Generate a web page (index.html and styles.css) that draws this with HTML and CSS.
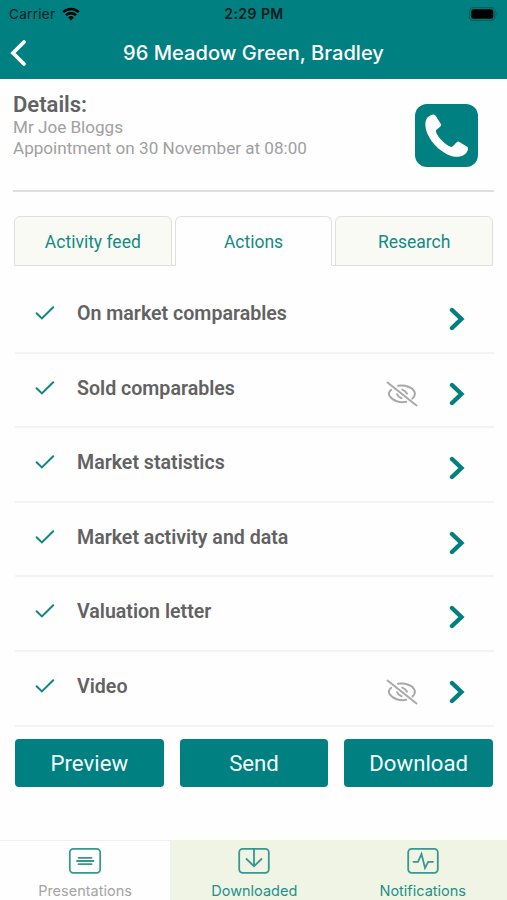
FILE: index.html
```html
<!DOCTYPE html>
<html lang="en">
<head>
<meta charset="utf-8">
<meta name="viewport" content="width=device-width, initial-scale=1">
<title>96 Meadow Green, Bradley</title>
<link rel="stylesheet" href="styles.css">
</head>
<body>
<svg class="defs" aria-hidden="true">
  <symbol id="check" viewBox="0 0 20 16"><path d="M1.6 8.3L6.9 13.4L18.2 2.2"/></symbol>
  <symbol id="chevron" viewBox="0 0 16 24"><path d="M3 3L12.4 12L3 21"/></symbol>
  <symbol id="hidden" viewBox="0 0 32 26">
    <path d="M1.5 1.5L30.5 24.5"/>
    <path d="M12 4.8C18.5 3.4 27.5 6.5 28.8 11.8C29.2 14 28 16.2 26.3 17.6"/>
    <path d="M5.2 8.8C3 10.5 2.2 13 3.8 15.3C6.8 20 14 22 20.2 20.8"/>
    <path d="M16.3 8.6C18.4 9.4 20.3 10.8 21 12.6"/>
    <path d="M11 13.2C11.8 15 13.4 16.6 15.6 17.2"/>
  </symbol>
</svg>
<header class="header">
  <div class="status">
    <div class="carrier"><span>Carrier</span>
      <svg class="wifi" viewBox="0 0 18 14"><path d="M9 13.4L6.2 10.4A4 4 0 0 1 11.8 10.4Z" fill="#000"/><path d="M4 8.2A7.2 7.2 0 0 1 14 8.2M1.2 5.1A11.2 11.2 0 0 1 16.8 5.1" fill="none" stroke="#000" stroke-width="2.5"/></svg>
    </div>
    <div class="time">2:29 PM</div>
    <svg class="battery" viewBox="0 0 30 14"><rect x=".6" y=".6" width="25.4" height="12.8" rx="4" fill="none" stroke="#04605f" stroke-width="1.2"/><rect x="2.3" y="2.2" width="22" height="9.6" rx="2.5"/><path d="M27.5 4.8Q30 7 27.5 9.2Z" fill="#04605f"/></svg>
  </div>
  <div class="nav">
    <svg class="back" viewBox="0 0 18 28"><path d="M15 3L4 14L15 25"/></svg>
    <h1 class="title">96 Meadow Green, Bradley</h1>
  </div>
</header>
<main class="main">
  <section class="details">
    <div>
      <h2 class="heading">Details:</h2>
      <p class="line name">Mr Joe Bloggs</p>
      <p class="line when">Appointment on 30 November at 08:00</p>
    </div>
    <div class="call"><svg viewBox="0 0 63 63"><path d="M13.2 12.8C15.5 10.8 18.5 9.6 20.3 11.3L26.2 20.5C26 23.5 21.3 24.8 20.8 27.2C22.2 32.7 30.5 41.1 36 43C38.5 43 41 37.5 43.5 37.5L52.6 43C53.8 45.7 51.7 49.3 48.9 51C44.5 53.7 37.8 53.2 31.8 50.2C20 44 10.5 31.5 10.3 20.8C10.3 17.5 11.3 14.6 13.2 12.8Z"/></svg></div>
  </section>
  <nav class="tabs">
    <div class="tab"><span>Activity feed</span></div><div class="gap"></div>
    <div class="tab active"><span>Actions</span></div><div class="gap"></div>
    <div class="tab"><span>Research</span></div>
  </nav>
  <ul class="list">
    <li class="row"><svg class="check"><use href="#check"/></svg><span class="label">On market comparables</span><svg class="chevron"><use href="#chevron"/></svg></li>
    <li class="row"><svg class="check"><use href="#check"/></svg><span class="label">Sold comparables</span><svg class="eye"><use href="#hidden"/></svg><svg class="chevron"><use href="#chevron"/></svg></li>
    <li class="row"><svg class="check"><use href="#check"/></svg><span class="label">Market statistics</span><svg class="chevron"><use href="#chevron"/></svg></li>
    <li class="row"><svg class="check"><use href="#check"/></svg><span class="label">Market activity and data</span><svg class="chevron"><use href="#chevron"/></svg></li>
    <li class="row"><svg class="check"><use href="#check"/></svg><span class="label">Valuation letter</span><svg class="chevron"><use href="#chevron"/></svg></li>
    <li class="row"><svg class="check"><use href="#check"/></svg><span class="label">Video</span><svg class="eye"><use href="#hidden"/></svg><svg class="chevron"><use href="#chevron"/></svg></li>
  </ul>
  <div class="buttons">
    <button class="button">Preview</button>
    <button class="button">Send</button>
    <button class="button">Download</button>
  </div>
</main>
<footer class="footer">
  <div class="item current"><svg viewBox="0 0 34 28"><rect x="1.8" y="1.8" width="30.4" height="24" rx="3.5"/><path d="M10.5 10.8H23.5M9 14H25.5M10.5 17.2H23.5"/></svg><span>Presentations</span></div>
  <div class="item"><svg viewBox="0 0 34 28"><rect x="2.2" y="1.8" width="29.6" height="24" rx="3.5"/><path d="M17 2V19M9.5 12L17 19.2L24.5 12"/></svg><span>Downloaded</span></div>
  <div class="item"><svg viewBox="0 0 34 28"><rect x="2.2" y="1.8" width="29.6" height="24" rx="3.5"/><path d="M7.5 14.8H12L15.5 7L19 21L22.2 14.8H27"/></svg><span>Notifications</span></div>
</footer>
</body>
</html>
```

FILE: styles.css
```css
* { box-sizing: border-box; }
body {
  margin: 0;
  height: 900px;
  display: flex;
  flex-direction: column;
  overflow: hidden;
  background: #fefefe;
  color: #626262;
  font-family: Roboto, "Liberation Sans", sans-serif;
}
.defs { display: none; }
.header { height: 79px; flex: none; background: #008080; }
.status {
  height: 27px;
  padding: 0 8px 0 9px;
  display: grid;
  grid-template-columns: 1fr auto 1fr;
  align-items: center;
  font-family: Inter, sans-serif;
  font-size: 13.5px;
  line-height: 28px;
  color: #001c1c;
}
.carrier { display: flex; align-items: center; gap: 7px; letter-spacing: .3px; }
.wifi { width: 18px; height: 14px; }
.time { font-weight: 600; font-size: 14px; letter-spacing: .45px; }
.battery { width: 30px; height: 14px; justify-self: end; }
.nav {
  height: 52px;
  padding: 0 9px;
  display: grid;
  grid-template-columns: 20px 1fr 20px;
  align-items: center;
}
.back { width: 18px; height: 28px; fill: none; stroke: #fff; stroke-width: 3.8; stroke-linecap: round; }
.title {
  margin: 0;
  text-align: center;
  color: #fff;
  font: 550 20.1px/50px Inter, sans-serif;
  white-space: nowrap;
}
.main { flex: 1; padding: 0 13px; }
.details {
  height: 113px;
  padding: 14px 16px 0 0;
  display: flex;
  justify-content: space-between;
  border-bottom: 2px solid #dedede;
}
.heading { margin: 0; font-size: 22px; line-height: 24px; font-weight: 600; }
.line { margin: 0; font-size: 17.1px; line-height: 20.5px; color: #a0a0a0; white-space: nowrap; }
.call { width: 63px; height: 63px; margin-top: 11px; border-radius: 12px; background: #008080; }
.call svg { display: block; fill: #fff; }
.tabs { margin-top: 24px; padding: 0 1px; height: 50px; display: flex; }
.tab {
  flex: 1;
  display: flex;
  justify-content: center;
  border: 1px solid #dfdfdb;
  border-radius: 6px 6px 0 0;
  background: #f9faf3;
  color: #128b85;
  font-size: 17.5px;
  line-height: 50px;
}
.tab.active { background: #fefefe; border-bottom-color: #fefefe; }
.gap { width: 3px; border-bottom: 1px solid #dfdfdb; }
.list { margin: 13px 0 0 2px; padding: 0; list-style: none; }
.row {
  height: 74.6px;
  padding: 0 29px 0 20px;
  display: flex;
  align-items: flex-start;
  border-bottom: 2px solid #f3f3f3;
}
.check { width: 20px; height: 16px; margin-top: 26px; fill: none; stroke: #108783; stroke-width: 2; stroke-linecap: round; }
.label { flex: 1; margin-left: 22px; padding-top: 23px; font-size: 19.6px; line-height: 24px; font-weight: 600; }
.eye { width: 32px; height: 26px; margin: 27px 31px 0 0; fill: none; stroke: #a9a9a9; stroke-width: 2; stroke-linecap: round; }
.chevron { width: 16px; height: 24px; margin-top: 28px; fill: none; stroke: #008080; stroke-width: 4.4; stroke-linecap: round; }
.buttons { margin: 12px 1px 0 2px; display: grid; grid-template-columns: repeat(3, 1fr); gap: 16px; }
.button {
  height: 48px;
  padding: 0;
  border: 0;
  border-radius: 4px;
  background: #008080;
  color: #f2ffff;
  font: 400 22.2px/48px Roboto, sans-serif;
}
.footer { height: 60px; flex: none; display: grid; grid-template-columns: 170px 1fr 1fr; }
.item {
  padding-top: 7px;
  display: flex;
  flex-direction: column;
  align-items: center;
  background: #f0f4e4;
  color: #23908a;
  font: 400 14.5px/20px Inter, sans-serif;
}
.item.current { background: #fefefe; border-top: 1px solid #f0f0f0; padding-top: 6px; color: #a4a4a4; }
.item svg { width: 34px; height: 28px; fill: none; stroke: #38978f; stroke-width: 1.8; stroke-linecap: round; }
.item span { margin-top: 6px; white-space: nowrap; }
```
